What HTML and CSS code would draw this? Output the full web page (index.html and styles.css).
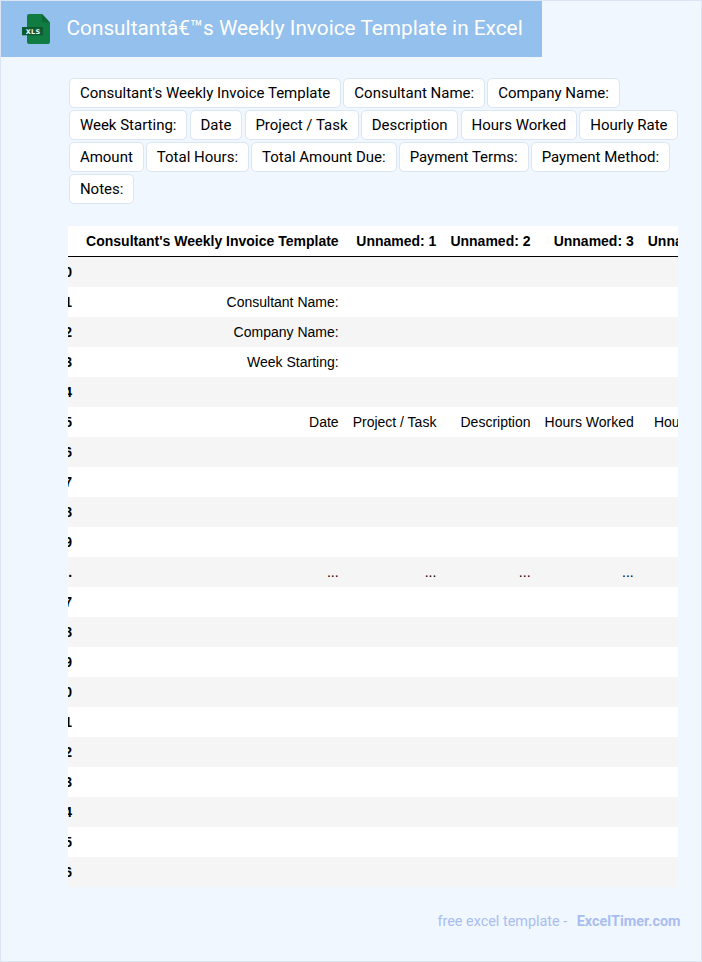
FILE: index.html
```html
<!DOCTYPE html>
<html lang="en">
<head>
<meta charset="utf-8">
<title>Consultant's Weekly Invoice Template in Excel</title>
<link rel="stylesheet" href="styles.css">
</head>
<body>
<header class="banner">
  <svg class="logo" width="30" height="30" viewBox="0 0 30 30" aria-hidden="true">
    <path d="M6 2a2 2 0 0 1 2-2h13l8 8.500V28a2 2 0 0 1-2 2H8a2 2 0 0 1-2-2z" fill="#107c41"/>
    <path d="M21 0v6.500a2 2 0 0 0 2 2h6z" fill="#0c6a37"/>
    <rect x="1" y="13" width="21" height="8.300" fill="#0b5a30"/>
    <text class="logo-text" x="12" y="20">XLS</text>
  </svg>
  <h1 class="title">Consultantâ€™s Weekly Invoice Template in Excel</h1>
</header>
<main class="content">
  <ul class="tags">
    <li class="tag">Consultant's Weekly Invoice Template</li>
    <li class="tag">Consultant Name:</li>
    <li class="tag">Company Name:</li>
    <li class="tag">Week Starting:</li>
    <li class="tag">Date</li>
    <li class="tag">Project / Task</li>
    <li class="tag">Description</li>
    <li class="tag">Hours Worked</li>
    <li class="tag">Hourly Rate</li>
    <li class="tag">Amount</li>
    <li class="tag">Total Hours:</li>
    <li class="tag">Total Amount Due:</li>
    <li class="tag">Payment Terms:</li>
    <li class="tag">Payment Method:</li>
    <li class="tag">Notes:</li>
  </ul>
  <div class="table-wrap">
    <table class="sheet">
      <thead>
        <tr><th></th><th>Consultant's Weekly Invoice Template</th><th>Unnamed: 1</th><th>Unnamed: 2</th><th>Unnamed: 3</th><th>Unnamed: 4</th></tr>
      </thead>
      <tbody>
        <tr><th>0</th><td></td><td></td><td></td><td></td><td></td></tr>
        <tr><th>1</th><td>Consultant Name:</td><td></td><td></td><td></td><td></td></tr>
        <tr><th>2</th><td>Company Name:</td><td></td><td></td><td></td><td></td></tr>
        <tr><th>3</th><td>Week Starting:</td><td></td><td></td><td></td><td></td></tr>
        <tr><th>4</th><td></td><td></td><td></td><td></td><td></td></tr>
        <tr><th>5</th><td>Date</td><td>Project / Task</td><td>Description</td><td>Hours Worked</td><td>Hourly Rate</td></tr>
        <tr><th>6</th><td></td><td></td><td></td><td></td><td></td></tr>
        <tr><th>7</th><td></td><td></td><td></td><td></td><td></td></tr>
        <tr><th>8</th><td></td><td></td><td></td><td></td><td></td></tr>
        <tr><th>9</th><td></td><td></td><td></td><td></td><td></td></tr>
        <tr><th>...</th><td>...</td><td>...</td><td>...</td><td>...</td><td>...</td></tr>
        <tr><th>17</th><td></td><td></td><td></td><td></td><td></td></tr>
        <tr><th>18</th><td></td><td></td><td></td><td></td><td></td></tr>
        <tr><th>19</th><td></td><td></td><td></td><td></td><td></td></tr>
        <tr><th>20</th><td></td><td></td><td></td><td></td><td></td></tr>
        <tr><th>21</th><td></td><td></td><td></td><td></td><td></td></tr>
        <tr><th>22</th><td></td><td></td><td></td><td></td><td></td></tr>
        <tr><th>23</th><td></td><td></td><td></td><td></td><td></td></tr>
        <tr><th>24</th><td></td><td></td><td></td><td></td><td></td></tr>
        <tr><th>25</th><td></td><td></td><td></td><td></td><td></td></tr>
        <tr><th>26</th><td></td><td></td><td></td><td></td><td></td></tr>
      </tbody>
    </table>
  </div>
</main>
<footer class="footer">
  <span class="footer-note">free excel template - </span><a class="footer-link" href="#">ExcelTimer.com</a>
</footer>
</body>
</html>
```

FILE: styles.css
```css
* { box-sizing: border-box; }
html, body { height: 100%; }
body {
  margin: 0;
  height: 962px;
  overflow: hidden;
  background: #f0f7ff;
  border: 1px solid #dbe5f3;
  font-family: Roboto, sans-serif;
}
.banner {
  display: flex;
  align-items: center;
  gap: 15.500px;
  width: 541px;
  height: 56px;
  padding-left: 20px;
  background: #93c0ec;
}
.logo { flex: none; }
.logo-text {
  font-family: "DejaVu Sans", sans-serif;
  font-size: 6.500px;
  font-weight: 700;
  letter-spacing: 0.300px;
  fill: #f4f8f5;
  text-anchor: middle;
}
.title {
  margin: 0 0 2px;
  font-size: 20.800px;
  font-weight: 400;
  color: #fff;
  white-space: nowrap;
}
.content { padding: 21px 22px 0 67px; }
.tags {
  display: flex;
  flex-wrap: wrap;
  gap: 2px 2.250px;
  margin: 0;
  padding: 0 0 0 1px;
  list-style: none;
}
.tag {
  height: 30px;
  padding: 0 9.875px;
  background: #fff;
  border: 1px solid #dbe5f3;
  border-radius: 5px;
  font-size: 15px;
  line-height: 28px;
  color: #000;
  white-space: nowrap;
}
.table-wrap {
  margin: 22px 1px 0 0;
  overflow: hidden;
  background: #fff;
}
.sheet {
  margin-left: -18.500px;
  border-collapse: separate;
  border-spacing: 0;
  font-family: "Liberation Sans", Arial, sans-serif;
  font-size: 14px;
  color: #000;
  white-space: nowrap;
}
.sheet th, .sheet td {
  height: 30px;
  padding: 0 7px;
  text-align: right;
  font-size: 14px;
}
.sheet th { font-weight: 700; }
.sheet thead th {
  height: 31px;
  border-bottom: 1px solid #000;
}
.sheet tbody tr:nth-child(odd) { background: #f5f5f5; }
.footer {
  margin-top: 24px;
  padding-right: 20.500px;
  text-align: right;
  font-size: 14.400px;
  line-height: 22px;
  color: #a9bdf0;
}
.footer-note { margin-right: 6px; }
.footer-link {
  font-weight: 700;
  color: #a9bdf0;
  text-decoration: none;
}
```
